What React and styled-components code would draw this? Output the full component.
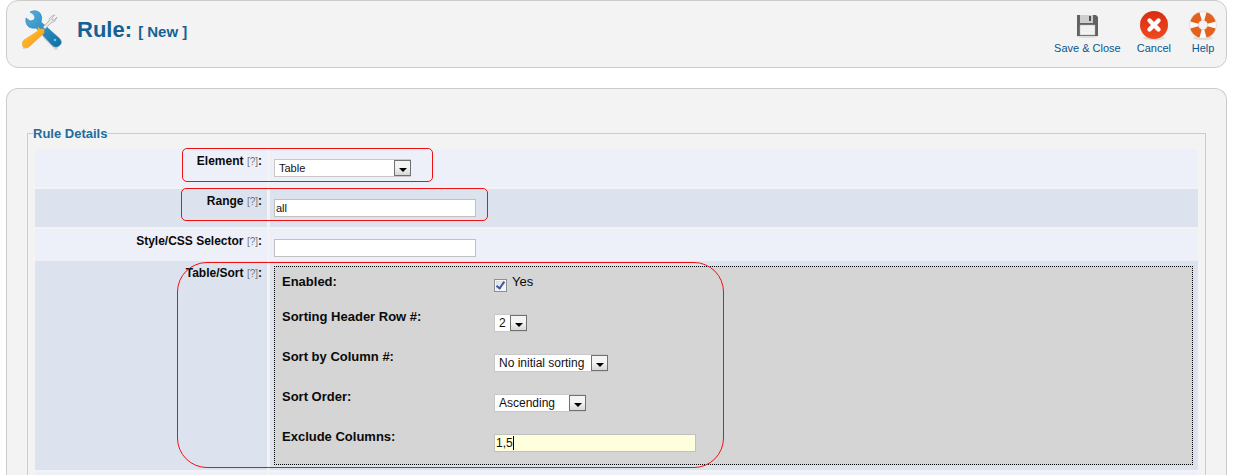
import React from "react";
import styled, { createGlobalStyle } from "styled-components";

const GlobalStyle = createGlobalStyle`
  *, *::before, *::after { box-sizing: border-box; }
  body {
    margin: 0;
    background: #fff;
    color: #0a0a0a;
    font-family: "Liberation Sans", Arial, sans-serif;
  }
`;

const Page = styled.div`
  display: flex;
  flex-direction: column;
  gap: 20px;
  min-height: 100vh;
  padding: 0 10px 0 6px;
`;

const Header = styled.header`
  display: flex;
  justify-content: space-between;
  align-items: flex-start;
  height: 68px;
  padding: 7px 7px 0 12px;
  border: 1px solid #ccc;
  border-radius: 12px;
  background: #f3f3f3;
`;

const Heading = styled.div`
  display: flex;
  align-items: center;
  gap: 10px;
`;

const Title = styled.h1`
  margin: 0;
  color: #146295;
  font-size: 22px;
  line-height: 44px;
  small { font-size: 15px; }
`;

const Toolbar = styled.nav`
  display: flex;
  gap: 16px;
`;

const ToolButton = styled.button`
  display: flex;
  flex-direction: column;
  align-items: center;
  padding: 0;
  border: 0;
  background: none;
  color: #0b5590;
  font: 11px/16px "Liberation Sans", Arial, sans-serif;
  cursor: pointer;
  svg { display: block; }
`;

const Panel = styled.main`
  flex: 1;
  padding: 35px 20px 0;
  border: 1px solid #ccc;
  border-bottom: 0;
  border-radius: 12px 12px 0 0;
  background: #f3f3f3;
`;

const Fieldset = styled.fieldset`
  min-width: 0;
  margin: 0;
  padding: 7px 7px 0;
  border: 1px solid #ccc;
  border-bottom: 0;
`;

const Legend = styled.legend`
  margin-left: -2px;
  padding: 1px 0 0;
  color: #236b9c;
  font-size: 13px;
  font-weight: bold;
  line-height: 17px;
`;

const Rows = styled.div`
  display: flex;
  flex-direction: column;
`;

const Row = styled.div`
  display: grid;
  grid-template-columns: 232px 1fr;
  column-gap: 3px;
  min-height: ${(p) => p.$height}px;
  margin-bottom: ${(p) => (p.$joined ? 0 : 2)}px;
  > * { background: ${(p) => (p.$dark ? "#dce3ee" : "#edf0f9")}; }
`;

const LabelCell = styled.div`
  padding: 4px 5px 0 0;
  font-size: 12px;
  font-weight: bold;
  line-height: 16px;
  text-align: right;
`;

const Hint = styled.span`
  color: #777;
  font-size: 10px;
  font-weight: normal;
`;

const FieldCell = styled.div`
  position: relative;
  display: flex;
  align-items: flex-start;
  padding: ${(p) => (p.$wide ? "5px 5px 5px 4px" : "10px 4px 4px")};
`;

const Callout = styled.div`
  position: absolute;
  z-index: 1;
  top: ${(p) => p.$top}px;
  left: ${(p) => p.$left}px;
  width: ${(p) => p.$width}px;
  height: ${(p) => p.$height}px;
  border: 1px solid #f01010;
  border-radius: ${(p) => p.$radius}px;
  pointer-events: none;
`;

const TextInput = styled.input`
  display: block;
  width: 202px;
  height: 18px;
  padding: 0 1px;
  border: 1px solid #c0c0c0;
  outline: 0;
  background: ${(p) => (p.$active ? "#ffffdd" : "#fff")};
  color: #111;
  font: ${(p) => p.$size || 11}px "Liberation Sans", Arial, sans-serif;
`;

const SelectBox = styled.div`
  position: relative;
  width: ${(p) => p.$width}px;
  height: 18px;
`;

const NativeSelect = styled.select`
  appearance: none;
  display: block;
  width: 100%;
  height: 100%;
  padding: 0 18px 0 4px;
  border: 1px solid #c8c8c8;
  border-radius: 0;
  background: #fff;
  color: #111;
  font: ${(p) => p.$size}px "Liberation Sans", Arial, sans-serif;
`;

const DropArrow = styled.span`
  position: absolute;
  top: 1px;
  right: 0;
  display: flex;
  align-items: center;
  justify-content: center;
  width: 17px;
  height: 16px;
  padding-top: 3px;
  border: 1px solid #707070;
  background: linear-gradient(#f4f4f4 45%, #d8d8d8);
  pointer-events: none;
  &::after {
    content: "";
    border: 4px solid transparent;
    border-top-color: #000;
    border-bottom: 0;
  }
`;

const SortBox = styled.div`
  flex: 1;
  padding: 4px 7px 0;
  border: 1px dotted #000;
  background: #d5d5d5;
`;

const SortRow = styled.div`
  display: grid;
  grid-template-columns: 212px 1fr;
  align-items: start;
  min-height: ${(p) => p.$height || 40}px;
`;

const SortLabel = styled.label`
  padding-top: 3px;
  font-size: 13px;
  font-weight: bold;
  line-height: 16px;
`;

const SortControl = styled.div`
  position: relative;
  padding-top: 8px;
`;

const CheckControl = styled.div`
  display: flex;
  align-items: flex-start;
  gap: 5px;
`;

const Checkbox = styled.input`
  appearance: none;
  display: grid;
  place-items: center;
  width: 13px;
  height: 13px;
  margin: 8px 0 0;
  border: 1px solid #8e8f8f;
  background: linear-gradient(135deg, #d5dae0, #fff);
  box-shadow: inset 0 0 0 1px #f4f4f4;
  &:checked::after {
    content: "";
    width: 5px;
    height: 9px;
    border: solid #3f55a0;
    border-width: 0 2px 2px 0;
    transform: translateY(-1px) rotate(35deg);
  }
`;

const CheckLabel = styled.label`
  padding-top: 3px;
  font-size: 13px;
  line-height: 16px;
`;

const Caret = styled.span`
  position: absolute;
  top: 10px;
  left: 19px;
  width: 1px;
  height: 14px;
  background: #000;
`;

function Select({ id, width, size = 12, options }) {
  return (
    <SelectBox $width={width}>
      <NativeSelect id={id} $size={size}>
        {options.map((o) => (
          <option key={o}>{o}</option>
        ))}
      </NativeSelect>
      <DropArrow />
    </SelectBox>
  );
}

function FieldLabel({ htmlFor, children }) {
  return (
    <LabelCell>
      <label htmlFor={htmlFor}>
        {children} <Hint>[?]</Hint>:
      </label>
    </LabelCell>
  );
}

function ToolsIcon() {
  return (
    <svg width="48" height="44" viewBox="0 0 48 44" aria-hidden="true">
      <defs>
        <linearGradient id="steel" x1="0" y1="0" x2="1" y2="1">
          <stop offset="0" stopColor="#55b2e2" />
          <stop offset="1" stopColor="#0c6ca0" />
        </linearGradient>
        <linearGradient id="amber" x1="0" y1="0" x2="1" y2="1">
          <stop offset="0" stopColor="#ffc743" />
          <stop offset="1" stopColor="#fb9507" />
        </linearGradient>
      </defs>
      <path d="M5 38L22 25M26 28L37 39" fill="none" stroke="#bbb" strokeWidth="4" strokeLinecap="round" opacity=".5" />
      <path d="M11 3Q17 0 21 4Q24 8 22 13L40 29Q44 33 41 36Q37 40 33 36L17 19Q11 20 8 16Q6 12 7 9L11 12Q15 12 16 9Q16 5 11 3Z" fill="url(#steel)" stroke="#2381b5" strokeWidth=".6" />
      <path d="M24 18L30 12Q30 7 36 6L33 9V11H35L38 8Q37 13 32 14L26 20Z" fill="#e9e9e9" stroke="#a5a5a5" strokeWidth=".7" />
      <path d="M19 18L21 20L25 20L25 24L11 37Q7 41 4 37Q2 34 5 31L19 22Z" fill="url(#amber)" stroke="#f6a51d" strokeWidth=".6" />
      <circle cx="36" cy="31" r="1.3" fill="#79c1e4" />
    </svg>
  );
}

function SaveIcon() {
  return (
    <svg width="32" height="32" viewBox="0 0 32 32" aria-hidden="true">
      <ellipse cx="16" cy="28" rx="11" ry="2" fill="#ddd" />
      <path d="M6 7H25L27 9V28H6Z" fill="#626262" />
      <path d="M9 7H22V15H9Z" fill="#cdcdcd" />
      <path d="M18 8H20V13H18Z" fill="#505050" />
      <path d="M9 17H24V27H9Z" fill="#f4f4f4" stroke="#aaa" strokeWidth=".5" />
      <path d="M11 20H22M11 23H22" stroke="#ececec" />
    </svg>
  );
}

function CancelIcon() {
  return (
    <svg width="32" height="32" viewBox="0 0 32 32" aria-hidden="true">
      <defs>
        <linearGradient id="alert" x1="0" y1="0" x2="0" y2="1">
          <stop offset="0" stopColor="#d92c13" />
          <stop offset="1" stopColor="#f04a1f" />
        </linearGradient>
      </defs>
      <ellipse cx="16" cy="30" rx="11" ry="2" fill="#ddd" />
      <circle cx="16" cy="17" r="14" fill="url(#alert)" />
      <path d="M11.5 12.5L20.5 21.5M20.5 12.5L11.5 21.5" stroke="#fff" strokeWidth="4.4" strokeLinecap="round" />
    </svg>
  );
}

function HelpIcon() {
  return (
    <svg width="32" height="32" viewBox="0 0 32 32" aria-hidden="true">
      <ellipse cx="16" cy="30" rx="10" ry="2" fill="#ddd" />
      <circle cx="16" cy="17" r="9" fill="none" stroke="#fafafa" strokeWidth="9" />
      <circle cx="16" cy="17" r="9" fill="none" stroke="#e3601d" strokeWidth="8.6" pathLength="80" strokeDasharray="13 7" strokeDashoffset="-3.5" />
      <circle cx="16" cy="17" r="13.5" fill="none" stroke="#d9cfc9" strokeWidth=".6" />
      <circle cx="16" cy="17" r="4.5" fill="#f3f3f3" stroke="#cfcac8" strokeWidth=".6" />
    </svg>
  );
}

const tools = [
  { label: "Save & Close", Icon: SaveIcon },
  { label: "Cancel", Icon: CancelIcon },
  { label: "Help", Icon: HelpIcon },
];

export default function App() {
  return (
    <>
      <GlobalStyle />
      <Page>
        <Header>
          <Heading>
            <ToolsIcon />
            <Title>
              Rule: <small>[ New ]</small>
            </Title>
          </Heading>
          <Toolbar>
            {tools.map(({ label, Icon }) => (
              <ToolButton key={label} type="button">
                <Icon />
                {label}
              </ToolButton>
            ))}
          </Toolbar>
        </Header>
        <Panel>
          <Fieldset>
            <Legend>Rule Details</Legend>
            <Rows>
              <Row $height={38}>
                <FieldLabel htmlFor="element">Element</FieldLabel>
                <FieldCell>
                  <Select id="element" width={137} size={11} options={["Table"]} />
                  <Callout $top={-1} $left={-88} $width={251} $height={34} $radius={5} />
                </FieldCell>
              </Row>
              <Row $height={38} $dark>
                <FieldLabel htmlFor="range">Range</FieldLabel>
                <FieldCell>
                  <TextInput id="range" type="text" defaultValue="all" />
                  <Callout $top={-1} $left={-89} $width={307} $height={33} $radius={5} />
                </FieldCell>
              </Row>
              <Row $height={32} $joined>
                <FieldLabel htmlFor="selector">Style/CSS Selector</FieldLabel>
                <FieldCell>
                  <TextInput id="selector" type="text" />
                </FieldCell>
              </Row>
              <Row $height={209} $dark>
                <FieldLabel htmlFor="enabled">Table/Sort</FieldLabel>
                <FieldCell $wide>
                  <SortBox>
                    <SortRow $height={35}>
                      <SortLabel as="span">Enabled:</SortLabel>
                      <CheckControl>
                        <Checkbox id="enabled" type="checkbox" defaultChecked />
                        <CheckLabel htmlFor="enabled">Yes</CheckLabel>
                      </CheckControl>
                    </SortRow>
                    <SortRow>
                      <SortLabel htmlFor="header-row">Sorting Header Row #:</SortLabel>
                      <SortControl>
                        <Select id="header-row" width={33} options={["2"]} />
                      </SortControl>
                    </SortRow>
                    <SortRow>
                      <SortLabel htmlFor="sort-column">Sort by Column #:</SortLabel>
                      <SortControl>
                        <Select id="sort-column" width={114} options={["No initial sorting"]} />
                      </SortControl>
                    </SortRow>
                    <SortRow>
                      <SortLabel htmlFor="sort-order">Sort Order:</SortLabel>
                      <SortControl>
                        <Select id="sort-order" width={92} options={["Ascending", "Descending"]} />
                      </SortControl>
                    </SortRow>
                    <SortRow $height={38}>
                      <SortLabel htmlFor="exclude">Exclude Columns:</SortLabel>
                      <SortControl>
                        <TextInput id="exclude" type="text" defaultValue="1,5" $active $size={12} />
                        <Caret />
                      </SortControl>
                    </SortRow>
                  </SortBox>
                  <Callout $top={1} $left={-93} $width={547} $height={206} $radius={30} />
                </FieldCell>
              </Row>
              <Row $height={3} $joined>
                <div />
                <div />
              </Row>
            </Rows>
          </Fieldset>
        </Panel>
      </Page>
    </>
  );
}
